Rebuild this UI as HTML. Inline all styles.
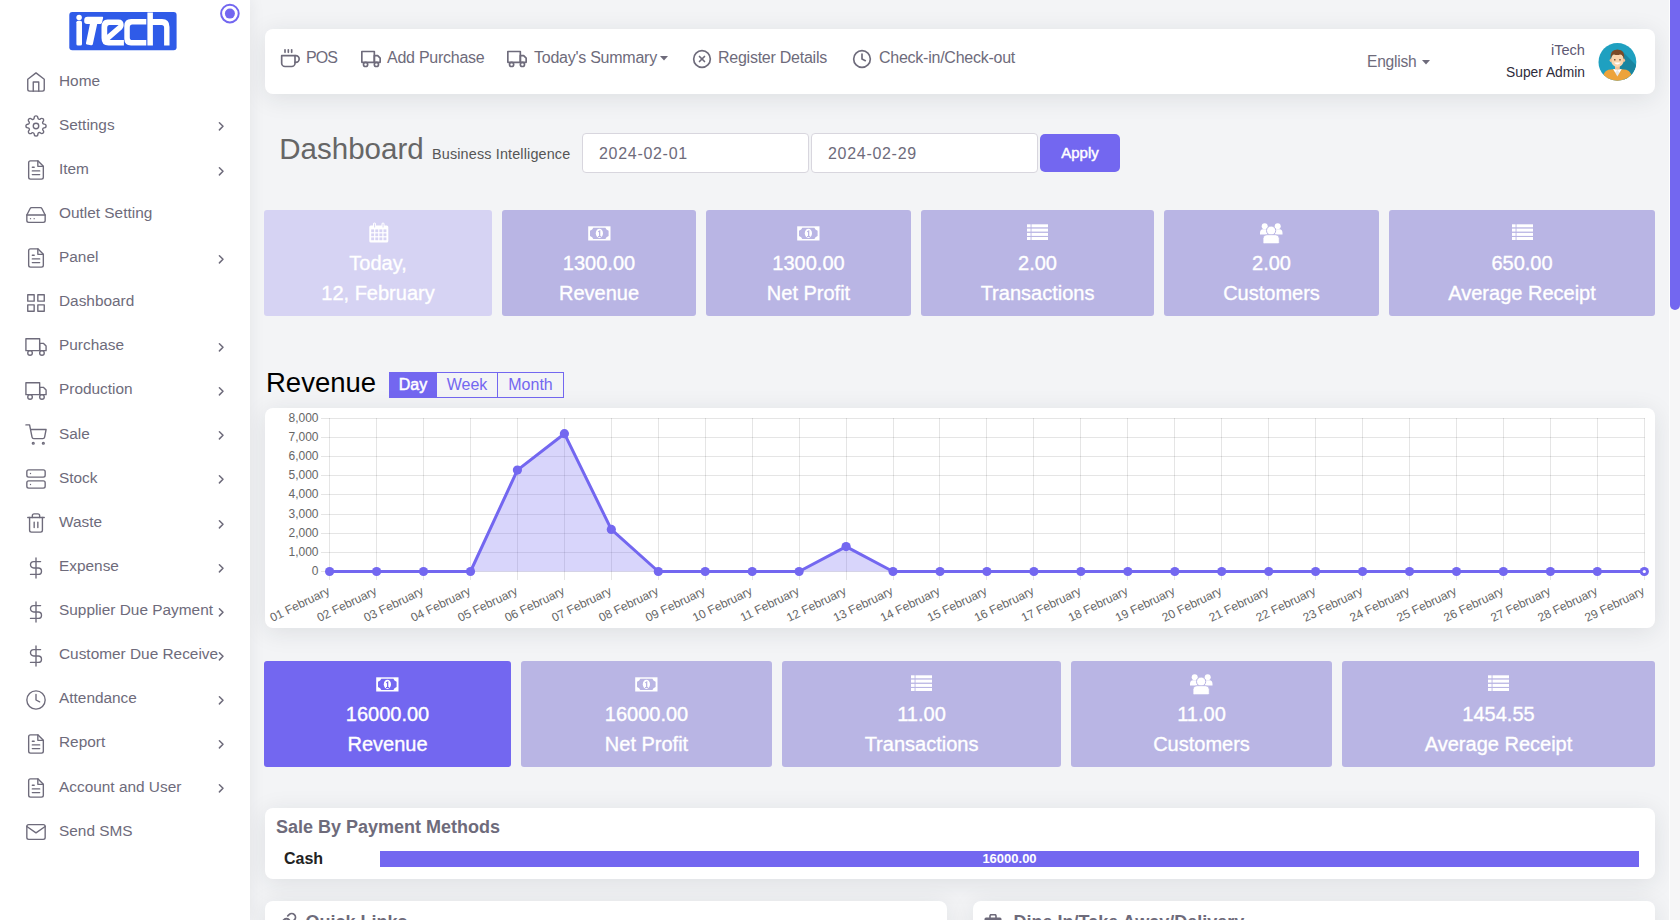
<!DOCTYPE html>
<html><head><meta charset="utf-8">
<style>
*{box-sizing:border-box;margin:0;padding:0}
html,body{width:1680px;height:920px;overflow:hidden}
body{background:#f3f4f6;font-family:"Liberation Sans",sans-serif;color:#6e6b7b;position:relative}
.abs{position:absolute}
#sidebar{position:absolute;left:0;top:0;width:250px;height:920px;background:#fff;box-shadow:0 0 15px 0 rgba(34,41,47,.08);z-index:2}
.nav{position:absolute;left:0;width:250px;height:20px;line-height:20px;font-size:15.4px;color:#6e6b7b;white-space:nowrap}
.nav .t{position:absolute;left:59px;top:0}
svg.fi{position:absolute;fill:none;stroke:#6e6b7b;stroke-linecap:round;stroke-linejoin:round}
.card{position:absolute;background:#fff;border-radius:8px;box-shadow:0 4px 24px 0 rgba(34,41,47,.10)}
.stat{position:absolute;border-radius:3px;background:#b9b5e4;color:#fff;text-align:center}
.stat .v{position:absolute;left:0;right:0;top:38.2px;font-size:20px;line-height:30px;white-space:nowrap;-webkit-text-stroke:0.35px #fff}
.stat .l{position:absolute;left:0;right:0;top:68.2px;font-size:20px;line-height:30px;white-space:nowrap;-webkit-text-stroke:0.35px #fff}
.stat svg{position:absolute;fill:#fff}
.ti{position:absolute;height:20px;line-height:20px;font-size:16px;letter-spacing:-0.25px;color:#6e6b7b;white-space:nowrap}
</style></head>
<body>

<div id="sidebar">
<svg class="abs" style="left:69px;top:12px" width="108" height="39" viewBox="0 0 108 39">
<rect x="0.3" y="0" width="107.3" height="38.2" rx="3" fill="#2f5be8"/>
<g fill="#fff">
<circle cx="10.1" cy="5.5" r="2.75"/>
<rect x="7.4" y="8.7" width="5.6" height="24.9" rx="1.6"/>
<path d="M18.5 4.8 H33.3 Q34.4 4.8 34.1 6 L33 10.6 Q32.7 11.9 31.5 11.9 H28.2 L23.8 32.2 Q23.5 33.5 22 33.2 L17.9 32.4 Q16.7 32.1 17 30.9 L20.9 11.9 H18 Q15.2 11.9 15.2 9.2 V8.2 Q15.2 4.8 18.5 4.8 Z"/>
<path d="M32.5 15 Q32.5 7.4 38.5 7.4 H49.5 Q54.7 7.4 54.7 13 Q54.7 15.5 53 17.3 L40.7 27.9 H54.9 V33.6 H39.5 Q32.5 33.6 32.5 26 Z M38.2 16 Q38.2 13.1 40.5 13.1 H49.6 L38.2 22.7 Z" fill-rule="evenodd"/>
<path d="M55.3 14 Q55.3 7.1 62 7.1 H77.3 V12.6 H63.3 Q60.8 12.6 60.8 15.2 V25.5 Q60.8 28.1 63.3 28.1 H77.3 V33.4 H62 Q55.3 33.4 55.3 26.5 Z"/>
<path d="M78.4 0.5 H83.9 V7.1 H93 Q100.5 7.1 100.5 15 V33.4 H95.1 V15.5 Q95.1 12.9 92.5 12.9 H83.9 V33.4 H78.4 Z"/>
</g></svg>
<svg class="abs" style="left:219px;top:3px" width="22" height="22" viewBox="0 0 22 22">
<circle cx="10.9" cy="10.6" r="8.8" fill="none" stroke="#7367f0" stroke-width="2"/>
<circle cx="10.9" cy="10.6" r="5" fill="#7367f0"/></svg>
<div class="nav" style="top:70.65px"><span class="t">Home</span></div>
<svg class="fi" style="left:25.00px;top:70.85px;" width="22" height="22" viewBox="0 0 24 24" stroke-width="1.5"><path d="M3 9l9-7 9 7v11a2 2 0 0 1-2 2H5a2 2 0 0 1-2-2z"/><polyline points="9 22 9 12 15 12 15 22"/></svg>
<div class="nav" style="top:114.77px"><span class="t">Settings</span></div>
<svg class="fi" style="left:25.00px;top:114.97px;" width="22" height="22" viewBox="0 0 24 24" stroke-width="1.5"><circle cx="12" cy="12" r="3"/><path d="M19.4 15a1.65 1.65 0 0 0 .33 1.82l.06.06a2 2 0 0 1 0 2.83 2 2 0 0 1-2.83 0l-.06-.06a1.65 1.65 0 0 0-1.82-.33 1.65 1.65 0 0 0-1 1.51V21a2 2 0 0 1-2 2 2 2 0 0 1-2-2v-.09A1.65 1.65 0 0 0 9 19.4a1.65 1.65 0 0 0-1.82.33l-.06.06a2 2 0 0 1-2.83 0 2 2 0 0 1 0-2.83l.06-.06a1.65 1.65 0 0 0 .33-1.82 1.65 1.65 0 0 0-1.51-1H3a2 2 0 0 1-2-2 2 2 0 0 1 2-2h.09A1.65 1.65 0 0 0 4.6 9a1.65 1.65 0 0 0-.33-1.82l-.06-.06a2 2 0 0 1 0-2.83 2 2 0 0 1 2.83 0l.06.06a1.65 1.65 0 0 0 1.82.33H9a1.65 1.65 0 0 0 1-1.51V3a2 2 0 0 1 2-2 2 2 0 0 1 2 2v.09a1.65 1.65 0 0 0 1 1.51 1.65 1.65 0 0 0 1.82-.33l.06-.06a2 2 0 0 1 2.83 0 2 2 0 0 1 0 2.83l-.06.06a1.65 1.65 0 0 0-.33 1.82V9a1.65 1.65 0 0 0 1.51 1H21a2 2 0 0 1 2 2 2 2 0 0 1-2 2h-.09a1.65 1.65 0 0 0-1.51 1z"/></svg>
<svg class="fi" style="left:216px;top:120.47px" width="12" height="12" viewBox="0 0 12 12" stroke-width="1.5"><polyline points="3.4 2.7 7 6.3 3.4 9.9"/></svg>
<div class="nav" style="top:158.89px"><span class="t">Item</span></div>
<svg class="fi" style="left:25.00px;top:159.09px;" width="22" height="22" viewBox="0 0 24 24" stroke-width="1.5"><path d="M14 2H6a2 2 0 0 0-2 2v16a2 2 0 0 0 2 2h12a2 2 0 0 0 2-2V8z"/><polyline points="14 2 14 8 20 8"/><line x1="16" y1="13" x2="8" y2="13"/><line x1="16" y1="17" x2="8" y2="17"/><polyline points="10 9 9 9 8 9"/></svg>
<svg class="fi" style="left:216px;top:164.59px" width="12" height="12" viewBox="0 0 12 12" stroke-width="1.5"><polyline points="3.4 2.7 7 6.3 3.4 9.9"/></svg>
<div class="nav" style="top:203.01px"><span class="t">Outlet Setting</span></div>
<svg class="fi" style="left:25.00px;top:204.21px;" width="22" height="22" viewBox="0 0 24 24" stroke-width="1.5"><line x1="22" y1="12" x2="2" y2="12"/><path d="M5.45 5.11L2 12v6a2 2 0 0 0 2 2h16a2 2 0 0 0 2-2v-6l-3.45-6.89A2 2 0 0 0 16.76 4H7.24a2 2 0 0 0-1.79 1.11z"/><line x1="6" y1="16" x2="6.01" y2="16"/><line x1="10" y1="16" x2="10.01" y2="16"/></svg>
<div class="nav" style="top:247.13px"><span class="t">Panel</span></div>
<svg class="fi" style="left:25.00px;top:247.33px;" width="22" height="22" viewBox="0 0 24 24" stroke-width="1.5"><path d="M14 2H6a2 2 0 0 0-2 2v16a2 2 0 0 0 2 2h12a2 2 0 0 0 2-2V8z"/><polyline points="14 2 14 8 20 8"/><line x1="16" y1="13" x2="8" y2="13"/><line x1="16" y1="17" x2="8" y2="17"/><polyline points="10 9 9 9 8 9"/></svg>
<svg class="fi" style="left:216px;top:252.83px" width="12" height="12" viewBox="0 0 12 12" stroke-width="1.5"><polyline points="3.4 2.7 7 6.3 3.4 9.9"/></svg>
<div class="nav" style="top:291.25px"><span class="t">Dashboard</span></div>
<svg class="fi" style="left:25.00px;top:292.45px;" width="22" height="22" viewBox="0 0 24 24" stroke-width="1.5"><rect x="3" y="3" width="7" height="7"/><rect x="14" y="3" width="7" height="7"/><rect x="14" y="14" width="7" height="7"/><rect x="3" y="14" width="7" height="7"/></svg>
<div class="nav" style="top:335.37px"><span class="t">Purchase</span></div>
<svg class="fi" style="left:25.00px;top:335.57px;" width="22" height="22" viewBox="0 0 24 24" stroke-width="1.5"><rect x="1" y="3" width="15" height="13"/><polygon points="16 8 20 8 23 11 23 16 16 16 16 8"/><circle cx="5.5" cy="18.5" r="2.5"/><circle cx="18.5" cy="18.5" r="2.5"/></svg>
<svg class="fi" style="left:216px;top:341.07px" width="12" height="12" viewBox="0 0 12 12" stroke-width="1.5"><polyline points="3.4 2.7 7 6.3 3.4 9.9"/></svg>
<div class="nav" style="top:379.49px"><span class="t">Production</span></div>
<svg class="fi" style="left:25.00px;top:379.69px;" width="22" height="22" viewBox="0 0 24 24" stroke-width="1.5"><rect x="1" y="3" width="15" height="13"/><polygon points="16 8 20 8 23 11 23 16 16 16 16 8"/><circle cx="5.5" cy="18.5" r="2.5"/><circle cx="18.5" cy="18.5" r="2.5"/></svg>
<svg class="fi" style="left:216px;top:385.19px" width="12" height="12" viewBox="0 0 12 12" stroke-width="1.5"><polyline points="3.4 2.7 7 6.3 3.4 9.9"/></svg>
<div class="nav" style="top:423.61px"><span class="t">Sale</span></div>
<svg class="fi" style="left:25.00px;top:423.81px;" width="22" height="22" viewBox="0 0 24 24" stroke-width="1.5"><circle cx="9" cy="21" r="1"/><circle cx="20" cy="21" r="1"/><path d="M1 1h4l2.68 13.39a2 2 0 0 0 2 1.61h9.72a2 2 0 0 0 2-1.61L23 6H6"/></svg>
<svg class="fi" style="left:216px;top:429.31px" width="12" height="12" viewBox="0 0 12 12" stroke-width="1.5"><polyline points="3.4 2.7 7 6.3 3.4 9.9"/></svg>
<div class="nav" style="top:467.73px"><span class="t">Stock</span></div>
<svg class="fi" style="left:25.00px;top:467.93px;" width="22" height="22" viewBox="0 0 24 24" stroke-width="1.5"><rect x="2" y="2" width="20" height="8" rx="2" ry="2"/><rect x="2" y="14" width="20" height="8" rx="2" ry="2"/><line x1="6" y1="6" x2="6.01" y2="6"/><line x1="6" y1="18" x2="6.01" y2="18"/></svg>
<svg class="fi" style="left:216px;top:473.43px" width="12" height="12" viewBox="0 0 12 12" stroke-width="1.5"><polyline points="3.4 2.7 7 6.3 3.4 9.9"/></svg>
<div class="nav" style="top:511.85px"><span class="t">Waste</span></div>
<svg class="fi" style="left:25.00px;top:512.05px;" width="22" height="22" viewBox="0 0 24 24" stroke-width="1.5"><polyline points="3 6 5 6 21 6"/><path d="M19 6v14a2 2 0 0 1-2 2H7a2 2 0 0 1-2-2V6m3 0V4a2 2 0 0 1 2-2h4a2 2 0 0 1 2 2v2"/><line x1="10" y1="11" x2="10" y2="17"/><line x1="14" y1="11" x2="14" y2="17"/></svg>
<svg class="fi" style="left:216px;top:517.55px" width="12" height="12" viewBox="0 0 12 12" stroke-width="1.5"><polyline points="3.4 2.7 7 6.3 3.4 9.9"/></svg>
<div class="nav" style="top:555.97px"><span class="t">Expense</span></div>
<svg class="fi" style="left:25.00px;top:556.97px;" width="22" height="22" viewBox="0 0 24 24" stroke-width="1.5"><line x1="12" y1="1" x2="12" y2="23"/><path d="M17 5H9.5a3.5 3.5 0 0 0 0 7h5a3.5 3.5 0 0 1 0 7H6"/></svg>
<svg class="fi" style="left:216px;top:561.67px" width="12" height="12" viewBox="0 0 12 12" stroke-width="1.5"><polyline points="3.4 2.7 7 6.3 3.4 9.9"/></svg>
<div class="nav" style="top:600.09px"><span class="t">Supplier Due Payment</span></div>
<svg class="fi" style="left:25.00px;top:601.09px;" width="22" height="22" viewBox="0 0 24 24" stroke-width="1.5"><line x1="12" y1="1" x2="12" y2="23"/><path d="M17 5H9.5a3.5 3.5 0 0 0 0 7h5a3.5 3.5 0 0 1 0 7H6"/></svg>
<svg class="fi" style="left:216px;top:605.79px" width="12" height="12" viewBox="0 0 12 12" stroke-width="1.5"><polyline points="3.4 2.7 7 6.3 3.4 9.9"/></svg>
<div class="nav" style="top:644.21px"><span class="t">Customer Due Receive</span></div>
<svg class="fi" style="left:25.00px;top:645.21px;" width="22" height="22" viewBox="0 0 24 24" stroke-width="1.5"><line x1="12" y1="1" x2="12" y2="23"/><path d="M17 5H9.5a3.5 3.5 0 0 0 0 7h5a3.5 3.5 0 0 1 0 7H6"/></svg>
<svg class="fi" style="left:216px;top:649.91px" width="12" height="12" viewBox="0 0 12 12" stroke-width="1.5"><polyline points="3.4 2.7 7 6.3 3.4 9.9"/></svg>
<div class="nav" style="top:688.33px"><span class="t">Attendance</span></div>
<svg class="fi" style="left:25.00px;top:688.53px;" width="22" height="22" viewBox="0 0 24 24" stroke-width="1.5"><circle cx="12" cy="12" r="10"/><polyline points="12 6 12 12 16 14"/></svg>
<svg class="fi" style="left:216px;top:694.03px" width="12" height="12" viewBox="0 0 12 12" stroke-width="1.5"><polyline points="3.4 2.7 7 6.3 3.4 9.9"/></svg>
<div class="nav" style="top:732.45px"><span class="t">Report</span></div>
<svg class="fi" style="left:25.00px;top:732.65px;" width="22" height="22" viewBox="0 0 24 24" stroke-width="1.5"><path d="M14 2H6a2 2 0 0 0-2 2v16a2 2 0 0 0 2 2h12a2 2 0 0 0 2-2V8z"/><polyline points="14 2 14 8 20 8"/><line x1="16" y1="13" x2="8" y2="13"/><line x1="16" y1="17" x2="8" y2="17"/><polyline points="10 9 9 9 8 9"/></svg>
<svg class="fi" style="left:216px;top:738.15px" width="12" height="12" viewBox="0 0 12 12" stroke-width="1.5"><polyline points="3.4 2.7 7 6.3 3.4 9.9"/></svg>
<div class="nav" style="top:776.57px"><span class="t">Account and User</span></div>
<svg class="fi" style="left:25.00px;top:776.77px;" width="22" height="22" viewBox="0 0 24 24" stroke-width="1.5"><path d="M14 2H6a2 2 0 0 0-2 2v16a2 2 0 0 0 2 2h12a2 2 0 0 0 2-2V8z"/><polyline points="14 2 14 8 20 8"/><line x1="16" y1="13" x2="8" y2="13"/><line x1="16" y1="17" x2="8" y2="17"/><polyline points="10 9 9 9 8 9"/></svg>
<svg class="fi" style="left:216px;top:782.27px" width="12" height="12" viewBox="0 0 12 12" stroke-width="1.5"><polyline points="3.4 2.7 7 6.3 3.4 9.9"/></svg>
<div class="nav" style="top:820.69px"><span class="t">Send SMS</span></div>
<svg class="fi" style="left:25.00px;top:820.89px;" width="22" height="22" viewBox="0 0 24 24" stroke-width="1.5"><path d="M4 4h16c1.1 0 2 .9 2 2v12c0 1.1-.9 2-2 2H4c-1.1 0-2-.9-2-2V6c0-1.1.9-2 2-2z"/><polyline points="22,6 12,13 2,6"/></svg>
</div>
<div class="card" style="left:265px;top:29px;width:1390px;height:65px;border-radius:8px"></div>
<svg class="fi" style="left:280.00px;top:48.80px;" width="20" height="20" viewBox="0 0 24 24" stroke-width="2"><path d="M18 8h1a4 4 0 0 1 0 8h-1"/><path d="M2 8h16v9a4 4 0 0 1-4 4H6a4 4 0 0 1-4-4V8z"/><line x1="6" y1="1" x2="6" y2="4"/><line x1="10" y1="1" x2="10" y2="4"/><line x1="14" y1="1" x2="14" y2="4"/></svg>
<div class="ti" style="left:306px;top:47.5px;letter-spacing:-0.9px">POS</div>
<svg class="fi" style="left:361.00px;top:48.70px;" width="20" height="20" viewBox="0 0 24 24" stroke-width="2"><rect x="1" y="3" width="15" height="13"/><polygon points="16 8 20 8 23 11 23 16 16 16 16 8"/><circle cx="5.5" cy="18.5" r="2.5"/><circle cx="18.5" cy="18.5" r="2.5"/></svg>
<div class="ti" style="left:387px;top:47.5px">Add Purchase</div>
<svg class="fi" style="left:507.00px;top:48.70px;" width="20" height="20" viewBox="0 0 24 24" stroke-width="2"><rect x="1" y="3" width="15" height="13"/><polygon points="16 8 20 8 23 11 23 16 16 16 16 8"/><circle cx="5.5" cy="18.5" r="2.5"/><circle cx="18.5" cy="18.5" r="2.5"/></svg>
<div class="ti" style="left:534px;top:47.5px">Today's Summary</div>
<svg class="abs" style="left:660px;top:56px" width="8" height="5" viewBox="0 0 8 5"><polygon points="0 0 8 0 4 4.5" fill="#6e6b7b"/></svg>
<svg class="fi" style="left:692.00px;top:49.00px;" width="20" height="20" viewBox="0 0 24 24" stroke-width="2"><circle cx="12" cy="12" r="10"/><line x1="15" y1="9" x2="9" y2="15"/><line x1="9" y1="9" x2="15" y2="15"/></svg>
<div class="ti" style="left:718px;top:47.5px">Register Details</div>
<svg class="fi" style="left:852.00px;top:49.00px;" width="20" height="20" viewBox="0 0 24 24" stroke-width="2"><circle cx="12" cy="12" r="10"/><polyline points="12 6 12 12 16 14"/></svg>
<div class="ti" style="left:879px;top:47.5px">Check-in/Check-out</div>
<div class="ti" style="left:1367px;top:52px;font-size:15.6px">English</div>
<svg class="abs" style="left:1422px;top:59.7px" width="8" height="5" viewBox="0 0 8 5"><polygon points="0 0 8 0 4 4.5" fill="#6e6b7b"/></svg>
<div class="abs" style="left:1400px;top:40.5px;font-size:14.6px;line-height:18px;text-align:right;color:#5e5873;width:185px">iTech</div>
<div class="abs" style="left:1400px;top:64.3px;font-size:13.8px;line-height:18px;text-align:right;color:#2e2b3b;width:185px">Super Admin</div>
<svg class="abs" style="left:1598px;top:42px" width="39" height="39" viewBox="0 0 39 39">
<defs><clipPath id="avc"><circle cx="19.4" cy="19.9" r="18.9"/></clipPath></defs>
<g clip-path="url(#avc)">
<rect width="39" height="39" fill="#1fa0c0"/>
<polygon points="23 8 40 25 40 40 28 40 17 28" fill="#1a85a0"/>
<path d="M4 40 Q4.5 29.5 10.5 27.8 L19.4 26.8 L28.3 27.8 Q34.3 29.5 34.8 40 Z" fill="#eda33b"/>
<path d="M15.2 27.2 L19.4 34.5 L23.6 27.2 Z" fill="#e8e8e8"/>
<path d="M15.2 27.2 L17.5 30.5 L19.4 27.2 Z M23.6 27.2 L21.3 30.5 L19.4 27.2 Z" fill="#fff"/>
<rect x="17" y="23" width="4.8" height="4.5" fill="#f3c298"/>
<ellipse cx="19.4" cy="17.8" rx="6.4" ry="7.2" fill="#fbd5ad"/>
<ellipse cx="12.9" cy="18.3" rx="1.2" ry="1.8" fill="#f3c298"/><ellipse cx="25.9" cy="18.3" rx="1.2" ry="1.8" fill="#f3c298"/>
<path d="M12.6 18 Q11.4 7.6 19.4 7.6 Q27.4 7.6 26.2 18 Q25.4 12.4 22 12.4 Q19.4 13.8 16 12.4 Q13.4 12.4 12.6 18 Z" fill="#7b4a27"/>
<rect x="16.1" y="16.9" width="1.4" height="1.7" rx="0.5" fill="#5a3a22"/><rect x="21.3" y="16.9" width="1.4" height="1.7" rx="0.5" fill="#5a3a22"/>
<path d="M15.9 20.6 Q19.4 24.6 22.9 20.6 Z" fill="#fff"/>
</g></svg>
<div class="abs" style="left:279.3px;top:132px;font-size:29.5px;line-height:34px;color:#666;letter-spacing:0px">Dashboard</div>
<div class="abs" style="left:432px;top:145.2px;font-size:14.4px;line-height:18px;color:#555;letter-spacing:0.15px">Business Intelligence</div>
<div class="abs" style="left:582px;top:133px;width:227px;height:40px;background:#fff;border:1px solid #d8d6de;border-radius:4px;font-size:16px;line-height:40px;padding-left:16px;color:#6e6b7b;letter-spacing:0.7px">2024-02-01</div>
<div class="abs" style="left:811px;top:133px;width:227px;height:40px;background:#fff;border:1px solid #d8d6de;border-radius:4px;font-size:16px;line-height:40px;padding-left:16px;color:#6e6b7b;letter-spacing:0.7px">2024-02-29</div>
<div class="abs" style="left:1040px;top:134px;width:80px;height:38px;background:#7367f0;border-radius:5px;font-size:15px;line-height:38px;text-align:center;color:#fff;-webkit-text-stroke:0.45px #fff">Apply</div>
<div class="stat" style="left:264px;top:210px;width:228px;height:106px;background:#d6d3f3">
<svg style="left:104.9px;top:12.3px" width="20" height="21" viewBox="0 0 20 21"><path d="M0.3 5 Q0.3 3.5 1.8 3.5 H4 V2 Q4 0.5 5.5 0.5 Q7 0.5 7 2 V3.5 H12.5 V2 Q12.5 0.5 14 0.5 Q15.5 0.5 15.5 2 V3.5 H17.8 Q19.3 3.5 19.3 5 V19 Q19.3 20.5 17.8 20.5 H1.8 Q0.3 20.5 0.3 19 Z"/><rect x="5.2" y="1.5" width="0.9" height="4" fill="#d6d3f3"/><rect x="13.6" y="1.5" width="0.9" height="4" fill="#d6d3f3"/><rect x="2.2" y="7.4" width="2.9" height="2.8" fill="#d6d3f3"/><rect x="6.3" y="7.4" width="2.9" height="2.8" fill="#d6d3f3"/><rect x="10.4" y="7.4" width="2.9" height="2.8" fill="#d6d3f3"/><rect x="14.5" y="7.4" width="2.9" height="2.8" fill="#d6d3f3"/><rect x="2.2" y="11.4" width="2.9" height="2.8" fill="#d6d3f3"/><rect x="6.3" y="11.4" width="2.9" height="2.8" fill="#d6d3f3"/><rect x="10.4" y="11.4" width="2.9" height="2.8" fill="#d6d3f3"/><rect x="14.5" y="11.4" width="2.9" height="2.8" fill="#d6d3f3"/><rect x="2.2" y="15.4" width="2.9" height="2.8" fill="#d6d3f3"/><rect x="6.3" y="15.4" width="2.9" height="2.8" fill="#d6d3f3"/><rect x="10.4" y="15.4" width="2.9" height="2.8" fill="#d6d3f3"/><rect x="14.5" y="15.4" width="2.9" height="2.8" fill="#d6d3f3"/></svg>
<div class="v">Today,</div><div class="l">12, February</div></div>
<div class="stat" style="left:502px;top:210px;width:194px;height:106px;background:#b9b5e4">
<svg style="left:85.8px;top:15.5px" width="23" height="15" viewBox="0 0 23 15"><rect x="0.2" y="0.3" width="22.3" height="14.2"/><path d="M5.3 1.8 H17.4 Q18 4 20.6 4.8 V9.9 Q18 10.7 17.4 12.9 H5.3 Q4.7 10.7 2 9.9 V4.8 Q4.7 4 5.3 1.8 Z" fill="#b9b5e4"/><ellipse cx="11.4" cy="7.3" rx="3.6" ry="4.6"/><path d="M10.1 5.3 L12.3 4.1 V9.9 H13.2 V10.9 H10 V9.9 H11 V6 L10.1 6.3 Z" fill="#b9b5e4"/></svg>
<div class="v">1300.00</div><div class="l">Revenue</div></div>
<div class="stat" style="left:706px;top:210px;width:205px;height:106px;background:#b9b5e4">
<svg style="left:91.3px;top:15.5px" width="23" height="15" viewBox="0 0 23 15"><rect x="0.2" y="0.3" width="22.3" height="14.2"/><path d="M5.3 1.8 H17.4 Q18 4 20.6 4.8 V9.9 Q18 10.7 17.4 12.9 H5.3 Q4.7 10.7 2 9.9 V4.8 Q4.7 4 5.3 1.8 Z" fill="#b9b5e4"/><ellipse cx="11.4" cy="7.3" rx="3.6" ry="4.6"/><path d="M10.1 5.3 L12.3 4.1 V9.9 H13.2 V10.9 H10 V9.9 H11 V6 L10.1 6.3 Z" fill="#b9b5e4"/></svg>
<div class="v">1300.00</div><div class="l">Net Profit</div></div>
<div class="stat" style="left:921px;top:210px;width:233px;height:106px;background:#b9b5e4">
<svg style="left:106.0px;top:14.3px" width="21" height="17" viewBox="0 0 21 17"><rect x="0" y="0.3" width="3.6" height="3"/><rect x="4.5" y="0.3" width="16.5" height="3"/><rect x="0" y="4.6" width="3.6" height="3"/><rect x="4.5" y="4.6" width="16.5" height="3"/><rect x="0" y="8.9" width="3.6" height="3"/><rect x="4.5" y="8.9" width="16.5" height="3"/><rect x="0" y="13.0" width="3.6" height="3"/><rect x="4.5" y="13.0" width="16.5" height="3"/></svg>
<div class="v">2.00</div><div class="l">Transactions</div></div>
<div class="stat" style="left:1164px;top:210px;width:215px;height:106px;background:#b9b5e4">
<svg style="left:96.3px;top:12.9px" width="23" height="21" viewBox="0 0 23 21"><circle cx="4.7" cy="3.2" r="3"/><circle cx="17.7" cy="3.2" r="3"/><path d="M0 10 Q0 6.2 3 6.2 H7 Q8 6.2 8.2 7 Q7.3 8.5 7.6 11.6 H0 Z"/><path d="M22.5 10 Q22.5 6.2 19.5 6.2 H15.5 Q14.5 6.2 14.3 7 Q15.2 8.5 14.9 11.6 H22.5 Z"/><circle cx="11.1" cy="7.6" r="4.6" stroke="#b9b5e4" stroke-width="1"/><path d="M3 15.5 Q3 11.7 7 11.7 H15.3 Q19.3 11.7 19.3 15.5 V19.5 Q19.3 20.7 18 20.7 H4.3 Q3 20.7 3 19.5 Z" stroke="#b9b5e4" stroke-width="0.8"/></svg>
<div class="v">2.00</div><div class="l">Customers</div></div>
<div class="stat" style="left:1389px;top:210px;width:266px;height:106px;background:#b9b5e4">
<svg style="left:122.5px;top:14.3px" width="21" height="17" viewBox="0 0 21 17"><rect x="0" y="0.3" width="3.6" height="3"/><rect x="4.5" y="0.3" width="16.5" height="3"/><rect x="0" y="4.6" width="3.6" height="3"/><rect x="4.5" y="4.6" width="16.5" height="3"/><rect x="0" y="8.9" width="3.6" height="3"/><rect x="4.5" y="8.9" width="16.5" height="3"/><rect x="0" y="13.0" width="3.6" height="3"/><rect x="4.5" y="13.0" width="16.5" height="3"/></svg>
<div class="v">650.00</div><div class="l">Average Receipt</div></div>
<div class="abs" style="left:266px;top:365px;font-size:27.5px;line-height:36px;color:#000">Revenue</div>
<div class="abs" style="left:389px;top:372px;width:175px;height:26px;border:1px solid #7367f0;font-size:16px;line-height:24px;color:#7367f0">
<div class="abs" style="left:0;top:0;width:46px;height:24px;background:#7367f0;color:#fff;text-align:center;font-size:16px;-webkit-text-stroke:0.5px #fff">Day</div>
<div class="abs" style="left:46px;top:0;width:61px;height:24px;border-left:1px solid #7367f0;text-align:center">Week</div>
<div class="abs" style="left:107px;top:0;width:66px;height:24px;border-left:1px solid #7367f0;text-align:center">Month</div>
</div>
<div class="card" style="left:265px;top:408px;width:1390px;height:220px"></div>
<svg class="abs" style="left:264px;top:408px" width="1391" height="220" viewBox="264 408 1391 220">
<line x1="321" y1="571.5" x2="1644.8" y2="571.5" stroke="rgba(0,0,0,0.1)" stroke-width="1"/>
<text x="318.5" y="574.9" text-anchor="end" font-family="Liberation Sans" font-size="12" fill="#666">0</text>
<line x1="321" y1="552.5" x2="1644.8" y2="552.5" stroke="rgba(0,0,0,0.1)" stroke-width="1"/>
<text x="318.5" y="555.8" text-anchor="end" font-family="Liberation Sans" font-size="12" fill="#666">1,000</text>
<line x1="321" y1="533.5" x2="1644.8" y2="533.5" stroke="rgba(0,0,0,0.1)" stroke-width="1"/>
<text x="318.5" y="536.6" text-anchor="end" font-family="Liberation Sans" font-size="12" fill="#666">2,000</text>
<line x1="321" y1="514.5" x2="1644.8" y2="514.5" stroke="rgba(0,0,0,0.1)" stroke-width="1"/>
<text x="318.5" y="517.5" text-anchor="end" font-family="Liberation Sans" font-size="12" fill="#666">3,000</text>
<line x1="321" y1="494.5" x2="1644.8" y2="494.5" stroke="rgba(0,0,0,0.1)" stroke-width="1"/>
<text x="318.5" y="498.3" text-anchor="end" font-family="Liberation Sans" font-size="12" fill="#666">4,000</text>
<line x1="321" y1="475.5" x2="1644.8" y2="475.5" stroke="rgba(0,0,0,0.1)" stroke-width="1"/>
<text x="318.5" y="479.2" text-anchor="end" font-family="Liberation Sans" font-size="12" fill="#666">5,000</text>
<line x1="321" y1="456.5" x2="1644.8" y2="456.5" stroke="rgba(0,0,0,0.1)" stroke-width="1"/>
<text x="318.5" y="460.1" text-anchor="end" font-family="Liberation Sans" font-size="12" fill="#666">6,000</text>
<line x1="321" y1="437.5" x2="1644.8" y2="437.5" stroke="rgba(0,0,0,0.1)" stroke-width="1"/>
<text x="318.5" y="440.9" text-anchor="end" font-family="Liberation Sans" font-size="12" fill="#666">7,000</text>
<line x1="321" y1="418.5" x2="1644.8" y2="418.5" stroke="rgba(0,0,0,0.1)" stroke-width="1"/>
<text x="318.5" y="421.8" text-anchor="end" font-family="Liberation Sans" font-size="12" fill="#666">8,000</text>
<line x1="329.5" y1="418.0" x2="329.5" y2="580" stroke="rgba(0,0,0,0.1)" stroke-width="1"/>
<line x1="376.5" y1="418.0" x2="376.5" y2="580" stroke="rgba(0,0,0,0.1)" stroke-width="1"/>
<line x1="423.5" y1="418.0" x2="423.5" y2="580" stroke="rgba(0,0,0,0.1)" stroke-width="1"/>
<line x1="470.5" y1="418.0" x2="470.5" y2="580" stroke="rgba(0,0,0,0.1)" stroke-width="1"/>
<line x1="517.5" y1="418.0" x2="517.5" y2="580" stroke="rgba(0,0,0,0.1)" stroke-width="1"/>
<line x1="564.5" y1="418.0" x2="564.5" y2="580" stroke="rgba(0,0,0,0.1)" stroke-width="1"/>
<line x1="611.5" y1="418.0" x2="611.5" y2="580" stroke="rgba(0,0,0,0.1)" stroke-width="1"/>
<line x1="658.5" y1="418.0" x2="658.5" y2="580" stroke="rgba(0,0,0,0.1)" stroke-width="1"/>
<line x1="705.5" y1="418.0" x2="705.5" y2="580" stroke="rgba(0,0,0,0.1)" stroke-width="1"/>
<line x1="752.5" y1="418.0" x2="752.5" y2="580" stroke="rgba(0,0,0,0.1)" stroke-width="1"/>
<line x1="799.5" y1="418.0" x2="799.5" y2="580" stroke="rgba(0,0,0,0.1)" stroke-width="1"/>
<line x1="846.5" y1="418.0" x2="846.5" y2="580" stroke="rgba(0,0,0,0.1)" stroke-width="1"/>
<line x1="893.5" y1="418.0" x2="893.5" y2="580" stroke="rgba(0,0,0,0.1)" stroke-width="1"/>
<line x1="939.5" y1="418.0" x2="939.5" y2="580" stroke="rgba(0,0,0,0.1)" stroke-width="1"/>
<line x1="986.5" y1="418.0" x2="986.5" y2="580" stroke="rgba(0,0,0,0.1)" stroke-width="1"/>
<line x1="1033.5" y1="418.0" x2="1033.5" y2="580" stroke="rgba(0,0,0,0.1)" stroke-width="1"/>
<line x1="1080.5" y1="418.0" x2="1080.5" y2="580" stroke="rgba(0,0,0,0.1)" stroke-width="1"/>
<line x1="1127.5" y1="418.0" x2="1127.5" y2="580" stroke="rgba(0,0,0,0.1)" stroke-width="1"/>
<line x1="1174.5" y1="418.0" x2="1174.5" y2="580" stroke="rgba(0,0,0,0.1)" stroke-width="1"/>
<line x1="1221.5" y1="418.0" x2="1221.5" y2="580" stroke="rgba(0,0,0,0.1)" stroke-width="1"/>
<line x1="1268.5" y1="418.0" x2="1268.5" y2="580" stroke="rgba(0,0,0,0.1)" stroke-width="1"/>
<line x1="1315.5" y1="418.0" x2="1315.5" y2="580" stroke="rgba(0,0,0,0.1)" stroke-width="1"/>
<line x1="1362.5" y1="418.0" x2="1362.5" y2="580" stroke="rgba(0,0,0,0.1)" stroke-width="1"/>
<line x1="1409.5" y1="418.0" x2="1409.5" y2="580" stroke="rgba(0,0,0,0.1)" stroke-width="1"/>
<line x1="1456.5" y1="418.0" x2="1456.5" y2="580" stroke="rgba(0,0,0,0.1)" stroke-width="1"/>
<line x1="1503.5" y1="418.0" x2="1503.5" y2="580" stroke="rgba(0,0,0,0.1)" stroke-width="1"/>
<line x1="1550.5" y1="418.0" x2="1550.5" y2="580" stroke="rgba(0,0,0,0.1)" stroke-width="1"/>
<line x1="1597.5" y1="418.0" x2="1597.5" y2="580" stroke="rgba(0,0,0,0.1)" stroke-width="1"/>
<line x1="1644.5" y1="418.0" x2="1644.5" y2="580" stroke="rgba(0,0,0,0.1)" stroke-width="1"/>
<path d="M329.6 571.5 L376.6 571.5 L423.5 571.5 L470.5 571.5 L517.4 470.1 L564.4 433.7 L611.3 529.4 L658.3 571.5 L705.2 571.5 L752.2 571.5 L799.1 571.5 L846.1 546.6 L893.0 571.5 L940.0 571.5 L986.9 571.5 L1033.9 571.5 L1080.9 571.5 L1127.8 571.5 L1174.8 571.5 L1221.7 571.5 L1268.7 571.5 L1315.6 571.5 L1362.6 571.5 L1409.5 571.5 L1456.5 571.5 L1503.4 571.5 L1550.4 571.5 L1597.3 571.5 L1644.3 571.5 L1644.3 571.5 L329.6 571.5 Z" fill="rgba(115,103,240,0.28)" stroke="none"/>
<path d="M329.6 571.5 L376.6 571.5 L423.5 571.5 L470.5 571.5 L517.4 470.1 L564.4 433.7 L611.3 529.4 L658.3 571.5 L705.2 571.5 L752.2 571.5 L799.1 571.5 L846.1 546.6 L893.0 571.5 L940.0 571.5 L986.9 571.5 L1033.9 571.5 L1080.9 571.5 L1127.8 571.5 L1174.8 571.5 L1221.7 571.5 L1268.7 571.5 L1315.6 571.5 L1362.6 571.5 L1409.5 571.5 L1456.5 571.5 L1503.4 571.5 L1550.4 571.5 L1597.3 571.5 L1644.3 571.5" fill="none" stroke="#7367f0" stroke-width="3" stroke-linejoin="round"/>
<circle cx="329.6" cy="571.5" r="4.6" fill="#7367f0"/>
<circle cx="376.6" cy="571.5" r="4.6" fill="#7367f0"/>
<circle cx="423.5" cy="571.5" r="4.6" fill="#7367f0"/>
<circle cx="470.5" cy="571.5" r="4.6" fill="#7367f0"/>
<circle cx="517.4" cy="470.1" r="4.6" fill="#7367f0"/>
<circle cx="564.4" cy="433.7" r="4.6" fill="#7367f0"/>
<circle cx="611.3" cy="529.4" r="4.6" fill="#7367f0"/>
<circle cx="658.3" cy="571.5" r="4.6" fill="#7367f0"/>
<circle cx="705.2" cy="571.5" r="4.6" fill="#7367f0"/>
<circle cx="752.2" cy="571.5" r="4.6" fill="#7367f0"/>
<circle cx="799.1" cy="571.5" r="4.6" fill="#7367f0"/>
<circle cx="846.1" cy="546.6" r="4.6" fill="#7367f0"/>
<circle cx="893.0" cy="571.5" r="4.6" fill="#7367f0"/>
<circle cx="940.0" cy="571.5" r="4.6" fill="#7367f0"/>
<circle cx="986.9" cy="571.5" r="4.6" fill="#7367f0"/>
<circle cx="1033.9" cy="571.5" r="4.6" fill="#7367f0"/>
<circle cx="1080.9" cy="571.5" r="4.6" fill="#7367f0"/>
<circle cx="1127.8" cy="571.5" r="4.6" fill="#7367f0"/>
<circle cx="1174.8" cy="571.5" r="4.6" fill="#7367f0"/>
<circle cx="1221.7" cy="571.5" r="4.6" fill="#7367f0"/>
<circle cx="1268.7" cy="571.5" r="4.6" fill="#7367f0"/>
<circle cx="1315.6" cy="571.5" r="4.6" fill="#7367f0"/>
<circle cx="1362.6" cy="571.5" r="4.6" fill="#7367f0"/>
<circle cx="1409.5" cy="571.5" r="4.6" fill="#7367f0"/>
<circle cx="1456.5" cy="571.5" r="4.6" fill="#7367f0"/>
<circle cx="1503.4" cy="571.5" r="4.6" fill="#7367f0"/>
<circle cx="1550.4" cy="571.5" r="4.6" fill="#7367f0"/>
<circle cx="1597.3" cy="571.5" r="4.6" fill="#7367f0"/>
<circle cx="1644.3" cy="571.5" r="4.6" fill="#7367f0"/>
<circle cx="1644.3" cy="571.5" r="1.6" fill="#fff"/>
<text transform="translate(327.1,586.5) rotate(-26)" text-anchor="end" font-family="Liberation Sans" font-size="12" fill="#666" dy="8">01 February</text>
<text transform="translate(374.1,586.5) rotate(-26)" text-anchor="end" font-family="Liberation Sans" font-size="12" fill="#666" dy="8">02 February</text>
<text transform="translate(421.0,586.5) rotate(-26)" text-anchor="end" font-family="Liberation Sans" font-size="12" fill="#666" dy="8">03 February</text>
<text transform="translate(468.0,586.5) rotate(-26)" text-anchor="end" font-family="Liberation Sans" font-size="12" fill="#666" dy="8">04 February</text>
<text transform="translate(514.9,586.5) rotate(-26)" text-anchor="end" font-family="Liberation Sans" font-size="12" fill="#666" dy="8">05 February</text>
<text transform="translate(561.9,586.5) rotate(-26)" text-anchor="end" font-family="Liberation Sans" font-size="12" fill="#666" dy="8">06 February</text>
<text transform="translate(608.8,586.5) rotate(-26)" text-anchor="end" font-family="Liberation Sans" font-size="12" fill="#666" dy="8">07 February</text>
<text transform="translate(655.8,586.5) rotate(-26)" text-anchor="end" font-family="Liberation Sans" font-size="12" fill="#666" dy="8">08 February</text>
<text transform="translate(702.7,586.5) rotate(-26)" text-anchor="end" font-family="Liberation Sans" font-size="12" fill="#666" dy="8">09 February</text>
<text transform="translate(749.7,586.5) rotate(-26)" text-anchor="end" font-family="Liberation Sans" font-size="12" fill="#666" dy="8">10 February</text>
<text transform="translate(796.6,586.5) rotate(-26)" text-anchor="end" font-family="Liberation Sans" font-size="12" fill="#666" dy="8">11 February</text>
<text transform="translate(843.6,586.5) rotate(-26)" text-anchor="end" font-family="Liberation Sans" font-size="12" fill="#666" dy="8">12 February</text>
<text transform="translate(890.5,586.5) rotate(-26)" text-anchor="end" font-family="Liberation Sans" font-size="12" fill="#666" dy="8">13 February</text>
<text transform="translate(937.5,586.5) rotate(-26)" text-anchor="end" font-family="Liberation Sans" font-size="12" fill="#666" dy="8">14 February</text>
<text transform="translate(984.4,586.5) rotate(-26)" text-anchor="end" font-family="Liberation Sans" font-size="12" fill="#666" dy="8">15 February</text>
<text transform="translate(1031.4,586.5) rotate(-26)" text-anchor="end" font-family="Liberation Sans" font-size="12" fill="#666" dy="8">16 February</text>
<text transform="translate(1078.4,586.5) rotate(-26)" text-anchor="end" font-family="Liberation Sans" font-size="12" fill="#666" dy="8">17 February</text>
<text transform="translate(1125.3,586.5) rotate(-26)" text-anchor="end" font-family="Liberation Sans" font-size="12" fill="#666" dy="8">18 February</text>
<text transform="translate(1172.3,586.5) rotate(-26)" text-anchor="end" font-family="Liberation Sans" font-size="12" fill="#666" dy="8">19 February</text>
<text transform="translate(1219.2,586.5) rotate(-26)" text-anchor="end" font-family="Liberation Sans" font-size="12" fill="#666" dy="8">20 February</text>
<text transform="translate(1266.2,586.5) rotate(-26)" text-anchor="end" font-family="Liberation Sans" font-size="12" fill="#666" dy="8">21 February</text>
<text transform="translate(1313.1,586.5) rotate(-26)" text-anchor="end" font-family="Liberation Sans" font-size="12" fill="#666" dy="8">22 February</text>
<text transform="translate(1360.1,586.5) rotate(-26)" text-anchor="end" font-family="Liberation Sans" font-size="12" fill="#666" dy="8">23 February</text>
<text transform="translate(1407.0,586.5) rotate(-26)" text-anchor="end" font-family="Liberation Sans" font-size="12" fill="#666" dy="8">24 February</text>
<text transform="translate(1454.0,586.5) rotate(-26)" text-anchor="end" font-family="Liberation Sans" font-size="12" fill="#666" dy="8">25 February</text>
<text transform="translate(1500.9,586.5) rotate(-26)" text-anchor="end" font-family="Liberation Sans" font-size="12" fill="#666" dy="8">26 February</text>
<text transform="translate(1547.9,586.5) rotate(-26)" text-anchor="end" font-family="Liberation Sans" font-size="12" fill="#666" dy="8">27 February</text>
<text transform="translate(1594.8,586.5) rotate(-26)" text-anchor="end" font-family="Liberation Sans" font-size="12" fill="#666" dy="8">28 February</text>
<text transform="translate(1641.8,586.5) rotate(-26)" text-anchor="end" font-family="Liberation Sans" font-size="12" fill="#666" dy="8">29 February</text>
</svg>
<div class="stat" style="left:264px;top:661px;width:247px;height:106px;background:#7367f0">
<svg style="left:112.3px;top:15.5px" width="23" height="15" viewBox="0 0 23 15"><rect x="0.2" y="0.3" width="22.3" height="14.2"/><path d="M5.3 1.8 H17.4 Q18 4 20.6 4.8 V9.9 Q18 10.7 17.4 12.9 H5.3 Q4.7 10.7 2 9.9 V4.8 Q4.7 4 5.3 1.8 Z" fill="#7367f0"/><ellipse cx="11.4" cy="7.3" rx="3.6" ry="4.6"/><path d="M10.1 5.3 L12.3 4.1 V9.9 H13.2 V10.9 H10 V9.9 H11 V6 L10.1 6.3 Z" fill="#7367f0"/></svg>
<div class="v">16000.00</div><div class="l">Revenue</div></div>
<div class="stat" style="left:521px;top:661px;width:251px;height:106px;background:#b9b5e4">
<svg style="left:114.3px;top:15.5px" width="23" height="15" viewBox="0 0 23 15"><rect x="0.2" y="0.3" width="22.3" height="14.2"/><path d="M5.3 1.8 H17.4 Q18 4 20.6 4.8 V9.9 Q18 10.7 17.4 12.9 H5.3 Q4.7 10.7 2 9.9 V4.8 Q4.7 4 5.3 1.8 Z" fill="#b9b5e4"/><ellipse cx="11.4" cy="7.3" rx="3.6" ry="4.6"/><path d="M10.1 5.3 L12.3 4.1 V9.9 H13.2 V10.9 H10 V9.9 H11 V6 L10.1 6.3 Z" fill="#b9b5e4"/></svg>
<div class="v">16000.00</div><div class="l">Net Profit</div></div>
<div class="stat" style="left:782px;top:661px;width:279px;height:106px;background:#b9b5e4">
<svg style="left:129.0px;top:14.3px" width="21" height="17" viewBox="0 0 21 17"><rect x="0" y="0.3" width="3.6" height="3"/><rect x="4.5" y="0.3" width="16.5" height="3"/><rect x="0" y="4.6" width="3.6" height="3"/><rect x="4.5" y="4.6" width="16.5" height="3"/><rect x="0" y="8.9" width="3.6" height="3"/><rect x="4.5" y="8.9" width="16.5" height="3"/><rect x="0" y="13.0" width="3.6" height="3"/><rect x="4.5" y="13.0" width="16.5" height="3"/></svg>
<div class="v">11.00</div><div class="l">Transactions</div></div>
<div class="stat" style="left:1071px;top:661px;width:261px;height:106px;background:#b9b5e4">
<svg style="left:119.3px;top:12.9px" width="23" height="21" viewBox="0 0 23 21"><circle cx="4.7" cy="3.2" r="3"/><circle cx="17.7" cy="3.2" r="3"/><path d="M0 10 Q0 6.2 3 6.2 H7 Q8 6.2 8.2 7 Q7.3 8.5 7.6 11.6 H0 Z"/><path d="M22.5 10 Q22.5 6.2 19.5 6.2 H15.5 Q14.5 6.2 14.3 7 Q15.2 8.5 14.9 11.6 H22.5 Z"/><circle cx="11.1" cy="7.6" r="4.6" stroke="#b9b5e4" stroke-width="1"/><path d="M3 15.5 Q3 11.7 7 11.7 H15.3 Q19.3 11.7 19.3 15.5 V19.5 Q19.3 20.7 18 20.7 H4.3 Q3 20.7 3 19.5 Z" stroke="#b9b5e4" stroke-width="0.8"/></svg>
<div class="v">11.00</div><div class="l">Customers</div></div>
<div class="stat" style="left:1342px;top:661px;width:313px;height:106px;background:#b9b5e4">
<svg style="left:146.0px;top:14.3px" width="21" height="17" viewBox="0 0 21 17"><rect x="0" y="0.3" width="3.6" height="3"/><rect x="4.5" y="0.3" width="16.5" height="3"/><rect x="0" y="4.6" width="3.6" height="3"/><rect x="4.5" y="4.6" width="16.5" height="3"/><rect x="0" y="8.9" width="3.6" height="3"/><rect x="4.5" y="8.9" width="16.5" height="3"/><rect x="0" y="13.0" width="3.6" height="3"/><rect x="4.5" y="13.0" width="16.5" height="3"/></svg>
<div class="v">1454.55</div><div class="l">Average Receipt</div></div>
<div class="card" style="left:265px;top:808px;width:1390px;height:71px"></div>
<div class="abs" style="left:276px;top:816px;font-size:18px;line-height:22px;color:#6e6b7b;font-weight:bold">Sale By Payment Methods</div>
<div class="abs" style="left:284px;top:849px;font-size:16px;line-height:20px;color:#222;font-weight:bold">Cash</div>
<div class="abs" style="left:380px;top:851px;width:1259px;height:16px;background:#7367f0;color:#fff;font-size:13px;line-height:16px;text-align:center;font-weight:bold">16000.00</div>
<div class="card" style="left:265px;top:901px;width:682px;height:100px"></div>
<div class="card" style="left:973px;top:901px;width:682px;height:100px"></div>
<svg class="fi" style="left:279px;top:912px" width="18" height="18" viewBox="0 0 24 24" stroke-width="2.4" stroke="#6e6b7b"><path d="M10 13a5 5 0 0 0 7.54.54l3-3a5 5 0 0 0-7.07-7.07l-1.72 1.71"/><path d="M14 11a5 5 0 0 0-7.54-.54l-3 3a5 5 0 0 0 7.07 7.07l1.71-1.71"/></svg>
<div class="abs" style="left:305.5px;top:910.7px;font-size:18px;line-height:22px;color:#6e6b7b;font-weight:bold">Quick Links</div>
<svg class="abs" style="left:984px;top:914px" width="18" height="10" viewBox="0 0 18 10"><path d="M6 4 V2 Q6 0.6 7.4 0.6 H10.6 Q12 0.6 12 2 V4" fill="none" stroke="#6e6b7b" stroke-width="1.6"/><rect x="0.5" y="3.6" width="17" height="8" rx="1.5" fill="#6e6b7b"/></svg>
<div class="abs" style="left:1013.5px;top:911.3px;font-size:18px;line-height:22px;color:#6e6b7b;font-weight:bold">Dine In/Take Away/Delivery</div>
<div class="abs" style="left:1669px;top:0;width:11px;height:920px;background:#f6f6f7;border-left:1px solid #fdfdfd"></div>
<div class="abs" style="left:1670px;top:0;width:10px;height:310px;background:#7367f0;border-radius:0 0 5px 5px"></div>
</body></html>
